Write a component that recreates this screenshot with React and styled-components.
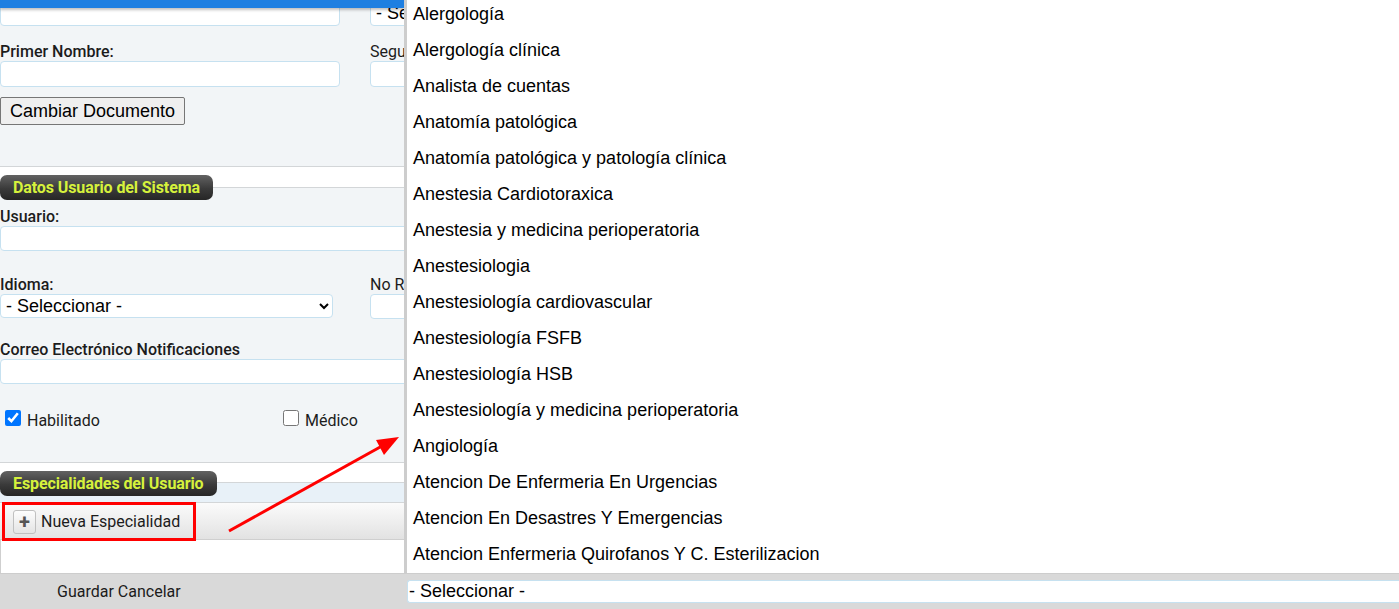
import React from "react";
import styled, { createGlobalStyle } from "styled-components";

const GlobalStyle = createGlobalStyle`
  html, body { margin: 0; padding: 0; }
  body {
    width: 1399px;
    height: 609px;
    overflow: hidden;
    background: #fff;
    font-family: Roboto, "Liberation Sans", sans-serif;
    color: #222;
  }
`;

const Page = styled.div`
  position: relative;
  width: 1399px;
  height: 609px;
  display: flex;
  flex-direction: column;
`;

const Main = styled.div`
  display: flex;
  height: 573px;
`;

const LeftPanel = styled.div`
  width: 404px;
  flex: none;
  background: #f2f5f7;
  overflow: hidden;
  display: flex;
  flex-direction: column;
`;

const BlueBar = styled.div`
  height: 8px;
  flex: none;
  background: #1e7fe1;
  box-shadow: 0 2px 3px rgba(0, 0, 0, 0.25);
  position: relative;
  z-index: 2;
`;

const Row = styled.div`
  display: flex;
  align-items: flex-start;
  gap: 30px;
  margin-top: ${(p) => p.$mt || 0}px;
  flex: none;
`;

const Field = styled.div`
  display: flex;
  flex-direction: column;
  width: ${(p) => (p.$w ? `${p.$w}px` : "calc(100% + 12px)")};
  flex: none;
  margin-top: ${(p) => p.$mt || 0}px;
`;

const Label = styled.div`
  font-size: 16px;
  line-height: 18px;
  height: 18px;
  white-space: nowrap;
  font-weight: ${(p) => (p.$bold ? 500 : 400)};
  color: #1c1c1c;
`;

const TextBox = styled.input`
  box-sizing: border-box;
  width: 100%;
  height: ${(p) => p.$h || 25}px;
  border: 1px solid #c6e1f0;
  border-radius: 4px;
  background: #fff;
  margin: 0;
  padding: 0 4px;
  outline: none;
`;

const Select = styled.select`
  box-sizing: border-box;
  width: ${(p) => p.$w || 333}px;
  height: ${(p) => p.$h || 24}px;
  border: 1px solid #c6e1f0;
  border-radius: 4px;
  background: #fff;
  color: #000;
  font-family: "Liberation Sans", Arial, sans-serif;
  font-size: 18px;
  padding: 0 1px;
  margin: 0;
`;

const Button = styled.button`
  box-sizing: border-box;
  align-self: flex-start;
  margin: 10px 0 0 0;
  height: 28px;
  padding: 0 9px;
  font-family: "Liberation Sans", Arial, sans-serif;
  font-size: 18px;
  color: #000;
  background: #efefef;
  border: 1px solid #767676;
  border-radius: 2px;
  flex: none;
`;

const Head = styled.div`
  position: relative;
  flex: none;
  height: ${(p) => p.$h}px;
  margin-top: ${(p) => p.$mt}px;
`;

const Band = styled.div`
  box-sizing: border-box;
  height: ${(p) => p.$h}px;
  background: ${(p) => p.$bg || "#fff"};
  border-top: ${(p) => (p.$top ? "1px solid #d3d6d8" : "none")};
  border-bottom: 1px solid #d3d6d8;
`;

const Pill = styled.div`
  position: absolute;
  top: 9px;
  left: 0;
  height: 25px;
  padding: 0 13px;
  border-radius: 7px;
  background: linear-gradient(#626262, #3a3a3a 55%, #262626);
  color: #d6f23c;
  font-size: 16px;
  font-weight: 700;
  line-height: 25px;
  white-space: nowrap;
  letter-spacing: -0.1px;
`;

const CheckRow = styled.div`
  display: flex;
  margin-top: 26px;
  padding-left: 5px;
  flex: none;
`;

const CheckItem = styled.label`
  display: flex;
  align-items: flex-start;
  flex: none;
  width: ${(p) => p.$w || 200}px;
  font-size: 16px;
  line-height: 22px;
  color: #1c1c1c;

  input {
    width: 16px;
    height: 16px;
    margin: 0 6px 0 0;
  }
`;

const Toolbar = styled.div`
  box-sizing: border-box;
  display: flex;
  align-items: stretch;
  height: 37px;
  flex: none;
  background: linear-gradient(#fbfbfb, #ececec 60%, #e2e2e2);
  border-bottom: 1px solid #cfcfcf;
`;

const Highlight = styled.div`
  position: relative;
  box-sizing: border-box;
  display: flex;
  align-items: center;
  width: 194px;
  margin: -1px 0 -2px 2px;
  padding-left: 8px;
  border: 3px solid #f00;
  z-index: 1;
`;

const PlusButton = styled.span`
  box-sizing: border-box;
  width: 23px;
  height: 24px;
  display: flex;
  align-items: center;
  justify-content: center;
  border: 1px solid #c0c0c0;
  border-radius: 3px;
  background: linear-gradient(#fdfdfd, #e4e4e4);
  color: #555;
  font-size: 20px;
  font-weight: 700;
  line-height: 1;
`;

const ToolText = styled.span`
  margin-left: 5px;
  font-size: 16px;
  color: #1c1c1c;
  white-space: nowrap;
`;

const Empty = styled.div`
  flex: 1;
  background: #fff;
  border-left: 1px solid #cfcfcf;
`;

const ListPanel = styled.div`
  flex: 1;
  background: #fff;
  border-left: 3px solid #cdcdcd;
  overflow: hidden;
`;

const List = styled.ul`
  list-style: none;
  margin: -4px 0 0 0;
  padding: 0 0 0 6px;
`;

const Item = styled.li`
  height: 36px;
  line-height: 36px;
  font-family: "Liberation Sans", Arial, sans-serif;
  font-size: 18px;
  color: #000;
  white-space: nowrap;
`;

const Footer = styled.div`
  box-sizing: border-box;
  display: flex;
  height: 36px;
  background: #d9d9d9;
  border-top: 1px solid #cdcdcd;
`;

const FooterActions = styled.div`
  width: 404px;
  flex: none;
  padding-left: 57px;
  box-sizing: border-box;
  font-size: 16px;
  line-height: 35px;
  color: #1c1c1c;
`;

const FooterSelect = styled.div`
  flex: 1;
  display: flex;
  align-items: flex-start;
  padding: 6px 0 0 3px;
`;

const SelectBox = styled.div`
  box-sizing: border-box;
  flex: 1;
  height: 23px;
  background: #fff;
  border: 1px solid #c6e1f0;
  border-right: none;
  border-radius: 3px 0 0 3px;
  padding-left: 1px;
  font-family: "Liberation Sans", Arial, sans-serif;
  font-size: 18px;
  line-height: 21px;
  color: #000;
`;

const Arrow = styled.svg`
  position: absolute;
  left: 0;
  top: 0;
  pointer-events: none;
`;

const specialties = [
  "Alergología",
  "Alergología clínica",
  "Analista de cuentas",
  "Anatomía patológica",
  "Anatomía patológica y patología clínica",
  "Anestesia Cardiotoraxica",
  "Anestesia y medicina perioperatoria",
  "Anestesiologia",
  "Anestesiología cardiovascular",
  "Anestesiología FSFB",
  "Anestesiología HSB",
  "Anestesiología y medicina perioperatoria",
  "Angiología",
  "Atencion De Enfermeria En Urgencias",
  "Atencion En Desastres Y Emergencias",
  "Atencion Enfermeria Quirofanos Y C. Esterilizacion",
];

export default function App() {
  return (
    <Page>
      <GlobalStyle />
      <Main>
        <LeftPanel>
          <BlueBar />
          <Row $mt={-8}>
            <Field $w={340}>
              <TextBox $h={26} />
            </Field>
            <Field $w={340}>
              <Select $w={340} $h={26}>
                <option>- Seleccionar -</option>
              </Select>
            </Field>
          </Row>

          <Row $mt={17}>
            <Field $w={340}>
              <Label $bold>Primer Nombre:</Label>
              <TextBox $h={26} />
            </Field>
            <Field $w={340}>
              <Label>Segundo Nombre:</Label>
              <TextBox $h={26} />
            </Field>
          </Row>

          <Button>Cambiar Documento</Button>

          <Head $h={34} $mt={41}>
            <Band $h={22} $top />
            <Pill>Datos Usuario del Sistema</Pill>
          </Head>

          <Field $mt={8}>
            <Label $bold>Usuario:</Label>
            <TextBox />
          </Field>

          <Row $mt={25}>
            <Field $w={340}>
              <Label $bold>Idioma:</Label>
              <Select>
                <option>- Seleccionar -</option>
              </Select>
            </Field>
            <Field $w={340}>
              <Label>No Registro:</Label>
              <TextBox />
            </Field>
          </Row>

          <Field $mt={22}>
            <Label $bold>Correo Electrónico Notificaciones</Label>
            <TextBox />
          </Field>

          <CheckRow>
            <CheckItem $w={278}>
              <input type="checkbox" defaultChecked />
              Habilitado
            </CheckItem>
            <CheckItem>
              <input type="checkbox" />
              Médico
            </CheckItem>
          </CheckRow>

          <Head $h={41} $mt={30}>
            <Band $h={21} $top />
            <Band $h={20} $bg="#e8f1f8" />
            <Pill>Especialidades del Usuario</Pill>
          </Head>

          <Toolbar>
            <Highlight>
              <PlusButton>+</PlusButton>
              <ToolText>Nueva Especialidad</ToolText>
            </Highlight>
          </Toolbar>

          <Empty />
        </LeftPanel>

        <ListPanel>
          <List>
            {specialties.map((s) => (
              <Item key={s}>{s}</Item>
            ))}
          </List>
        </ListPanel>
      </Main>

      <Footer>
        <FooterActions>Guardar Cancelar</FooterActions>
        <FooterSelect>
          <SelectBox>- Seleccionar -</SelectBox>
        </FooterSelect>
      </Footer>

      <Arrow width="1399" height="609" viewBox="0 0 1399 609">
        <line x1="229" y1="531" x2="382" y2="446" stroke="#f00" strokeWidth="3" />
        <polygon points="399,437 376,440 384,455" fill="#f00" />
      </Arrow>
    </Page>
  );
}
